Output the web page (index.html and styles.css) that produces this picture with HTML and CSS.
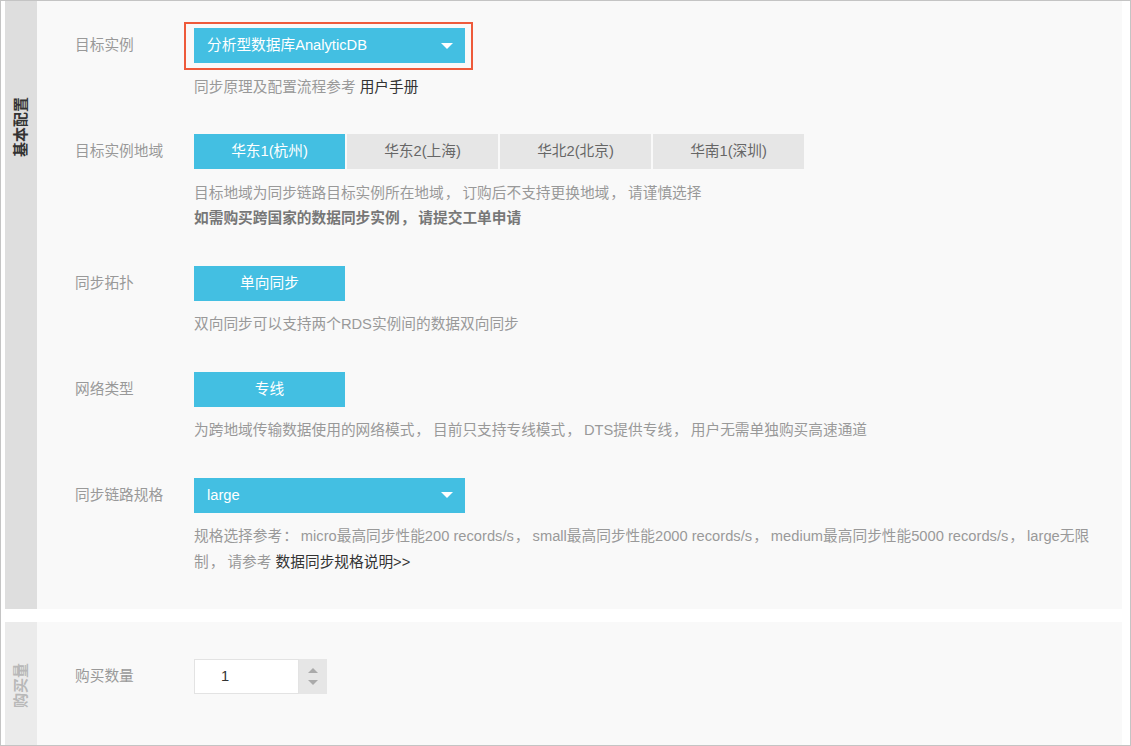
FILE: index.html
```html
<!DOCTYPE html>
<html lang="zh-CN">
<head>
<meta charset="utf-8">
<title>同步配置</title>
<link rel="stylesheet" href="styles.css">
</head>
<body>
<div class="frame">
  <section class="panel panel-basic">
    <div class="tab"><span class="tab-text">基本配置</span></div>
    <div class="body">
      <div class="row">
        <div class="label">目标实例</div>
        <div class="field">
          <div class="highlight-wrap">
            <div class="select">
              <span>分析型数据库AnalyticDB</span>
              <span class="caret"></span>
            </div>
            <div class="highlight"></div>
          </div>
          <p class="help">同步原理及配置流程参考 <a class="link">用户手册</a></p>
        </div>
      </div>

      <div class="row">
        <div class="label">目标实例地域</div>
        <div class="field">
          <div class="btn-group">
            <span class="btn active">华东1(杭州)</span>
            <span class="btn">华东2(上海)</span>
            <span class="btn">华北2(北京)</span>
            <span class="btn">华南1(深圳)</span>
          </div>
          <p class="help">目标地域为同步链路目标实例所在地域<span class="comma">，</span>订购后不支持更换地域<span class="comma">，</span>请谨慎选择<br><strong class="strong">如需购买跨国家的数据同步实例<span class="comma">，</span>请提交工单申请</strong></p>
        </div>
      </div>

      <div class="row">
        <div class="label">同步拓扑</div>
        <div class="field">
          <div class="btn-group">
            <span class="btn active">单向同步</span>
          </div>
          <p class="help">双向同步可以支持两个RDS实例间的数据双向同步</p>
        </div>
      </div>

      <div class="row">
        <div class="label">网络类型</div>
        <div class="field">
          <div class="btn-group">
            <span class="btn active">专线</span>
          </div>
          <p class="help">为跨地域传输数据使用的网络模式<span class="comma">，</span>目前只支持专线模式<span class="comma">，</span>DTS提供专线<span class="comma">，</span>用户无需单独购买高速通道</p>
        </div>
      </div>

      <div class="row">
        <div class="label">同步链路规格</div>
        <div class="field">
          <div class="select">
            <span>large</span>
            <span class="caret"></span>
          </div>
          <p class="help help-wide">规格选择参考<span class="comma">：</span>micro最高同步性能200 records/s<span class="comma">，</span>small最高同步性能2000 records/s<span class="comma">，</span>medium最高同步性能5000 records/s<span class="comma">，</span>large无限制<span class="comma">，</span>请参考 <a class="link">数据同步规格说明&gt;&gt;</a></p>
        </div>
      </div>
    </div>
  </section>

  <section class="panel panel-buy">
    <div class="tab tab-light"><span class="tab-text">购买量</span></div>
    <div class="body body-buy">
      <div class="row">
        <div class="label">购买数量</div>
        <div class="field">
          <div class="number">
            <span class="number-value">1</span>
            <span class="spinner">
              <span class="arrow-up"></span>
              <span class="arrow-down"></span>
            </span>
          </div>
        </div>
      </div>
    </div>
  </section>
</div>
</body>
</html>
```

FILE: styles.css
```css
* { box-sizing: border-box; }

html, body {
  margin: 0;
  padding: 0;
  background: #ffffff;
}

body {
  font-family: "Liberation Sans", "Noto Sans CJK SC", sans-serif;
  font-size: 14.7px;
  color: #999999;
}

.frame {
  width: 1131px;
  height: 746px;
  border: 1px solid #c4c4c4;
  padding: 0 8px 0 4px;
  overflow: hidden;
  display: flex;
  flex-direction: column;
  gap: 13px;
}

.panel {
  display: flex;
  background: #f9f9f9;
  flex-shrink: 0;
}

.panel-basic {
  height: 608px;
}

.panel-buy {
  height: 160px;
}

.tab {
  width: 32px;
  flex-shrink: 0;
  background: #dedede;
  display: flex;
  justify-content: center;
  align-items: flex-start;
  padding-top: 96px;
}

.tab-light {
  background: #ebebeb;
  padding-top: 41px;
}

.tab-text {
  writing-mode: vertical-rl;
  text-orientation: sideways;
  transform: rotate(180deg);
  font-size: 15px;
  font-weight: bold;
  line-height: 16px;
  color: #333333;
}

.tab-light .tab-text {
  color: #b8b8b8;
}

.body {
  flex: 1;
  padding: 27px 20px 0 38px;
  display: flex;
  flex-direction: column;
  gap: 34px;
}

.body-buy {
  padding-top: 37px;
}

.row {
  display: flex;
  align-items: flex-start;
}

.label {
  width: 119px;
  flex-shrink: 0;
  line-height: 35px;
  height: 35px;
  color: #999999;
}

.field {
  flex: 1;
  min-width: 0;
}

.highlight-wrap {
  position: relative;
  width: 271px;
}

.highlight {
  position: absolute;
  left: -10px;
  top: -6px;
  right: -8px;
  bottom: -7px;
  border: 2px solid #ee5a3b;
  pointer-events: none;
}

.select {
  width: 271px;
  height: 35px;
  background: #43bfe2;
  color: #ffffff;
  display: flex;
  align-items: center;
  justify-content: space-between;
  padding: 0 12px 0 13px;
  line-height: 35px;
}

.caret {
  width: 0;
  height: 0;
  border-left: 6.5px solid transparent;
  border-right: 6.5px solid transparent;
  border-top: 6px solid #ffffff;
}

.help {
  margin: 11.5px 0 0 0;
  line-height: 25.5px;
  color: #999999;
}

.comma {
  margin: 0 3px 0 1px;
}

.help-wide {
  max-width: 902px;
}

.link {
  color: #333333;
  text-decoration: none;
}

.strong {
  color: #777777;
  font-weight: bold;
}

.btn-group {
  display: flex;
  gap: 2px;
}

.btn {
  width: 151px;
  height: 35px;
  line-height: 35px;
  text-align: center;
  background: #e6e6e6;
  color: #666666;
}

.btn.active {
  background: #43bfe2;
  color: #ffffff;
}

.number {
  display: flex;
  height: 35px;
}

.number-value {
  width: 105px;
  height: 35px;
  background: #ffffff;
  border: 1px solid #e3e3e3;
  padding-left: 26px;
  line-height: 33px;
  color: #333333;
}

.spinner {
  width: 28px;
  height: 35px;
  background: #e6e6e6;
  display: flex;
  flex-direction: column;
  align-items: center;
  justify-content: center;
  gap: 7px;
}

.arrow-up {
  width: 0;
  height: 0;
  border-left: 5px solid transparent;
  border-right: 5px solid transparent;
  border-bottom: 5px solid #aaaaaa;
}

.arrow-down {
  width: 0;
  height: 0;
  border-left: 5px solid transparent;
  border-right: 5px solid transparent;
  border-top: 5px solid #aaaaaa;
}
```
